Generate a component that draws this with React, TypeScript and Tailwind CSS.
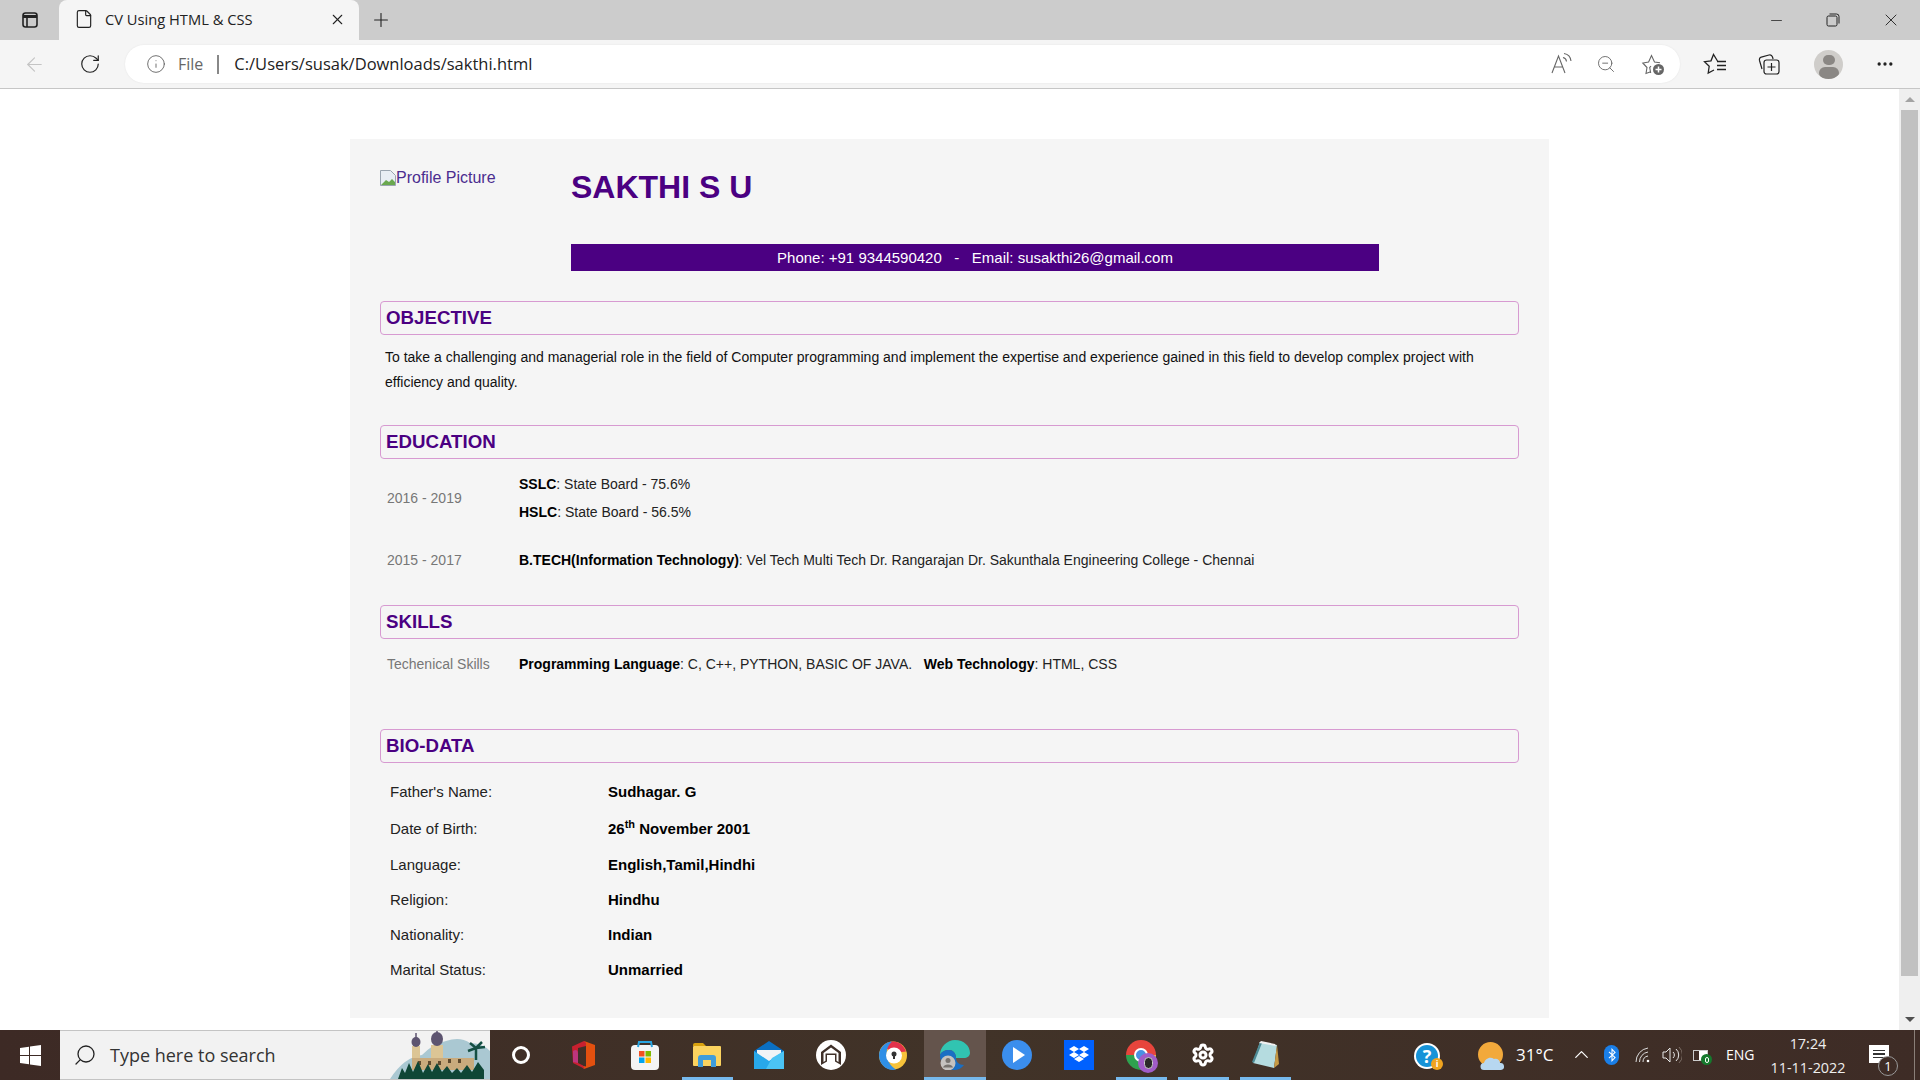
import { ReactNode } from "react";
import {
  ArrowLeft,
  ChevronUp,
  File,
  Info,
  Minus,
  MoreHorizontal,
  Plus,
  RotateCw,
  Search,
  Settings,
  X,
  ZoomOut,
} from "lucide-react";

function Heading({ title }: { title: string }) {
  return (
    <div className="h-[34px] border border-[#d79ad1] rounded-[4px] flex items-center pl-[5px] text-[18.7px] font-bold text-[#4b0082]">
      {title}
    </div>
  );
}

function BioRow({ label, value, top }: { label: string; value: ReactNode; top: string }) {
  return (
    <div className={`flex h-[20px] items-center text-[15px] ${top}`}>
      <div className="w-[228px] pl-[10px] text-[#222]">{label}</div>
      <div className="font-bold text-black">{value}</div>
    </div>
  );
}

function TabBar() {
  return (
    <div className="h-[40px] bg-[#cccccc] flex items-end">
      <div className="w-[59px] h-[40px] flex items-center justify-center">
        <svg width="18" height="18" viewBox="0 0 18 18" fill="none" stroke="#222" strokeWidth="1.6">
          <rect x="2" y="2" width="14" height="14" rx="2.5" />
          <path d="M2 5.5h14" strokeWidth="3" />
          <path d="M6 5v11" />
        </svg>
      </div>
      <div className="w-[300px] h-[40px] bg-[#f5f5f5] rounded-t-[8px] flex items-center pl-[15px] pr-[13px] pb-[2px]">
        <File size={20} strokeWidth={1.4} className="text-[#222]" />
        <span className="ml-[11px] flex-1 text-[14.7px] text-[#222] font-['Open_Sans',sans-serif]">CV Using HTML &amp; CSS</span>
        <X size={17} strokeWidth={1.5} className="text-[#222]" />
      </div>
      <div className="ml-[11px] h-[40px] flex items-center">
        <Plus size={22} strokeWidth={1.2} className="text-[#222]" />
      </div>
      <div className="flex-1" />
      <div className="h-[40px] flex items-center text-[#222]">
        <Minus size={17} strokeWidth={1.1} />
        <svg className="ml-[41px]" width="14" height="14" viewBox="0 0 14 14" fill="none" stroke="#222" strokeWidth="1">
          <rect x="1" y="3" width="10" height="10" rx="1.5" />
          <path d="M3.5 1h7a2.5 2.5 0 0 1 2.5 2.5v7" />
        </svg>
        <X size={20} strokeWidth={1.1} className="ml-[41px] mr-[19px]" />
      </div>
    </div>
  );
}

function AddressBar() {
  return (
    <div className="h-[49px] bg-[#f5f5f5] border-b border-[#c6c6c6] flex items-center">
      <ArrowLeft size={23} strokeWidth={1.2} className="ml-[23px] text-[#c4c4c4]" />
      <RotateCw size={22} strokeWidth={1.3} className="ml-[33px] text-[#222]" />
      <div className="ml-[24px] w-[1555px] h-[38px] bg-white rounded-full flex items-center pl-[21px] pr-[15px] shadow-[0_0_2px_rgba(0,0,0,0.08)]">
        <Info size={20} strokeWidth={1} className="text-[#555]" />
        <span className="ml-[12px] text-[16px] text-[#666] font-['Open_Sans',sans-serif]">File</span>
        <span className="ml-[14px] w-[2px] h-[19px] bg-[#888]" />
        <span className="ml-[15px] text-[16.5px] text-[#222] font-['Open_Sans',sans-serif]">C:/Users/susak/Downloads/sakthi.html</span>
        <div className="flex-1" />
        <svg width="22" height="24" viewBox="0 0 22 24" fill="none" stroke="#666" strokeWidth="1.1">
          <path d="M1 21L7.5 4 14 21M3.5 15h8" />
          <path d="M12 5.5a4.500 4.500 0 0 1 3.500 4M13 1.500a8.500 8.500 0 0 1 7 7.500" />
        </svg>
        <ZoomOut size={20} strokeWidth={1.1} className="ml-[23px] text-[#666]" />
        <svg className="ml-[25px]" width="24" height="24" viewBox="0 0 24 24" fill="none" stroke="#666" strokeWidth="1.1">
          <path d="M10 14.200L8.700 15.500l1 5.500M9.700 19.800L5 21.500l1-6L1.800 11l5.800-1L10.500 3.500l3 6.500 5.500.7" />
          <circle cx="17.500" cy="17.500" r="5.500" fill="#666" stroke="none" />
          <path d="M17.500 14.500v6M14.500 17.500h6" stroke="#fff" strokeWidth="1.5" />
        </svg>
      </div>
      <svg className="ml-[23px]" width="24" height="24" viewBox="0 0 24 24" fill="none" stroke="#222" strokeWidth="1.3">
        <path d="M14.500 9L10.500 2.500 8 8.800l-6.500.9 4.700 4.600-1 6.700 5.800-3" />
        <path d="M14 9.500h9M14 13.500h9M14 17.500h9" />
      </svg>
      <svg className="ml-[30px]" width="24" height="24" viewBox="0 0 24 24" fill="none" stroke="#222" strokeWidth="1.2">
        <path d="M5 17L2.500 8.500c-.4-1.500.3-3 1.800-3.400L12 3c1.500-.4 3 .4 3.500 2l.6 2" />
        <rect x="7" y="8" width="15" height="14" rx="2.5" />
        <path d="M14.500 11v8M10.500 15h8" />
      </svg>
      <div className="ml-[33px] w-[29px] h-[29px] rounded-full bg-[#cfcdca] flex flex-col items-center overflow-hidden">
        <div className="mt-[5px] w-[12px] h-[12px] rounded-full bg-[#8a8784]" />
        <div className="mt-[2px] w-[20px] h-[14px] rounded-full bg-[#8a8784]" />
      </div>
      <MoreHorizontal size={20} strokeWidth={2} className="ml-[32px] text-[#222]" />
    </div>
  );
}

function Scrollbar() {
  return (
    <div className="w-[21px] bg-[#efefef] flex flex-col items-center pl-[2px] pr-[2px]">
      <div className="h-[21px] flex items-center justify-center">
        <div className="w-0 h-0 border-x-[5px] border-x-transparent border-b-[5px] border-b-[#a3a3a3]" />
      </div>
      <div className="w-full h-[866px] bg-[#c1c1c1]" />
      <div className="flex-1 flex items-end justify-center pb-[8px]">
        <div className="w-0 h-0 border-x-[5px] border-x-transparent border-t-[5px] border-t-[#505050]" />
      </div>
    </div>
  );
}

function CvCard() {
  return (
    <div className="ml-[350px] mt-[50px] w-[1199px] h-[879px] bg-[#f5f5f5] px-[30px] font-['Liberation_Sans',Arial,sans-serif]">
      <div className="flex h-[162px] pt-[25px]">
        <div className="w-[191px] flex items-start pt-[5px] text-[16px] leading-[18px] text-[#4b2d8f]">
          <svg className="mt-[1px]" width="16" height="16" viewBox="0 0 16 16">
            <path d="M0.5 0.5h10l5 5v10h-15z" fill="#e8eef5" stroke="#9aa5b1" />
            <path d="M1 15l5-5 3 2 3-3 3 3v3z" fill="#6aa84f" />
          </svg>
          <span>Profile Picture</span>
        </div>
        <div className="w-[808px]">
          <div className="text-[32px] leading-[38px] font-bold text-[#4b0082] mt-[4px]">SAKTHI S U</div>
          <div className="mt-[38px] h-[27px] pt-[1px] bg-[#4b0082] text-white text-[15px] flex items-center justify-center whitespace-pre">
            {"Phone: +91 9344590420   -   Email: susakthi26@gmail.com"}
          </div>
        </div>
      </div>

      <Heading title="OBJECTIVE" />
      <p className="mt-[10px] pl-[5px] pr-[20px] text-[14px] leading-[25px] text-[#111]">
        To take a challenging and managerial role in the field of Computer programming and implement the expertise and experience gained in this field to develop complex project with efficiency and quality.
      </p>

      <div className="mt-[30px]">
        <Heading title="EDUCATION" />
      </div>
      <div className="mt-[11px] flex text-[14px] h-[56px]">
        <div className="w-[139px] pl-[7px] self-center text-[#777]">2016 - 2019</div>
        <div className="leading-[28px] text-[#222]">
          <div><b className="text-black">SSLC</b>: State Board - 75.6%</div>
          <div><b className="text-black">HSLC</b>: State Board - 56.5%</div>
        </div>
      </div>
      <div className="mt-[20px] flex items-center text-[14px] h-[28px]">
        <div className="w-[139px] pl-[7px] text-[#777]">2015 - 2017</div>
        <div className="text-[#222]">
          <b className="text-black">B.TECH(Information Technology)</b>: Vel Tech Multi Tech Dr. Rangarajan Dr. Sakunthala Engineering College - Chennai
        </div>
      </div>

      <div className="mt-[31px]">
        <Heading title="SKILLS" />
      </div>
      <div className="mt-[11px] flex items-center text-[14px] h-[28px] whitespace-pre">
        <div className="w-[139px] pl-[7px] text-[#777]">Techenical Skills</div>
        <div className="text-[#222]">
          <b className="text-black">Programming Language</b>: C, C++, PYTHON, BASIC OF JAVA.{"   "}<b className="text-black">Web Technology</b>: HTML, CSS
        </div>
      </div>

      <div className="mt-[51px]">
        <Heading title="BIO-DATA" />
      </div>
      <BioRow top="mt-[19px]" label="Father's Name:" value="Sudhagar. G" />
      <BioRow
        top="mt-[17px]"
        label="Date of Birth:"
        value={
          <span>
            26<sup className="text-[11px]">th</sup> November 2001
          </span>
        }
      />
      <BioRow top="mt-[16px]" label="Language:" value="English,Tamil,Hindhi" />
      <BioRow top="mt-[15px]" label="Religion:" value="Hindhu" />
      <BioRow top="mt-[15px]" label="Nationality:" value="Indian" />
      <BioRow top="mt-[15px]" label="Marital Status:" value="Unmarried" />
    </div>
  );
}

function TaskIcon({ children, active, open }: { children: ReactNode; active?: boolean; open?: boolean }) {
  return (
    <div className={`relative w-[62px] h-[50px] flex items-center justify-center ${active ? "bg-[#64544c]" : ""}`}>
      {children}
      {open && <div className={`absolute bottom-0 h-[3px] bg-[#76b9ed] ${active ? "left-0 right-0" : "left-[6px] right-[5px]"}`} />}
    </div>
  );
}

function SearchScene() {
  return (
    <svg className="absolute right-0 bottom-0" width="100" height="48" viewBox="0 0 100 48">
      <path d="M0 48q14-22 32-24 12-12 24-14 14-5 24 2 12 0 20 8v28z" fill="#aac8d2" />
      <rect x="22" y="15" width="8" height="16" fill="#dcc595" />
      <rect x="41" y="14" width="12" height="16" fill="#dcc595" />
      <rect x="22" y="27" width="62" height="12" fill="#c9ab7d" />
      <path d="M26 2v5M47 -1v4" stroke="#5d5470" strokeWidth="1.5" />
      <ellipse cx="26" cy="11" rx="4.5" ry="5" fill="#5d5470" />
      <ellipse cx="47" cy="8" rx="6" ry="7" fill="#5d5470" />
      <path d="M28 34v-4h3v4zM38 34v-4h3v4zM48 34v-4h3v4zM58 32v-4h3v4zM68 32v-4h3v4z" fill="#5e4a2e" />
      <path d="M86 29v-12M86 17l-8 3M86 17l9-1M86 17l-6-5M86 17l6-6" stroke="#154f43" strokeWidth="2.5" fill="none" />
      <path d="M8 48l4-11 3 5 4-10 4 9 5-11 5 12 5-9 4 8 5-9 5 9 5-6 5 7 5-5 4 5 6-8 5 7 6-10 6 8v9z" fill="#0f4636" />
    </svg>
  );
}

function Taskbar() {
  return (
    <div className="relative h-[50px] flex bg-gradient-to-r from-[#3d2a25] via-[#413328] to-[#3e2c26] text-white font-['Open_Sans',sans-serif]">
      <div className="w-[60px] flex items-center justify-center">
        <svg width="21" height="21" viewBox="0 0 21 21" fill="#fff">
          <path d="M0 3l9-1.300v8.300H0zM10 1.500L21 0v10H10zM0 11h9v8.300L0 18zM10 11h11v10l-11-1.500z" />
        </svg>
      </div>
      <div className="w-[430px] h-[50px] bg-[#f2f2f2] border-y border-[#c4c4c4] flex items-center relative overflow-hidden">
        <Search size={24} strokeWidth={1.3} className="ml-[13px] text-[#222] -scale-x-100" />
        <span className="ml-[13px] text-[18px] text-[#333]">Type here to search</span>
        <SearchScene />
      </div>
      <TaskIcon>
        <div className="w-[18px] h-[18px] rounded-full border-[3px] border-white" />
      </TaskIcon>
      <TaskIcon>
        <svg width="24" height="28" viewBox="0 0 24 28">
          <path d="M13 0l11 4v20l-11 4-3-3.500 5 1V5z" fill="#e2500f" />
          <path d="M13 0L1 5.500 2 22l12 6-2-3.500-5-2.500V7l8-2V2z" fill="#c8202f" />
          <path d="M2 10c3-2 5-1 5 3v9l-5-1z" fill="#b93f9e" opacity="0.7" />
        </svg>
      </TaskIcon>
      <TaskIcon>
        <svg width="30" height="30" viewBox="0 0 30 30">
          <rect x="1" y="5" width="28" height="25" rx="4" fill="#f4f4f4" />
          <path d="M8 7L9 2h12l1 5" fill="none" stroke="#29a4e0" strokeWidth="2" />
          <rect x="9" y="11" width="5.500" height="5.500" fill="#f25022" />
          <rect x="15.500" y="11" width="5.500" height="5.500" fill="#7fba00" />
          <rect x="9" y="17.500" width="5.500" height="5.500" fill="#00a4ef" />
          <rect x="15.500" y="17.500" width="5.500" height="5.500" fill="#ffb900" />
        </svg>
      </TaskIcon>
      <TaskIcon open>
        <svg width="28" height="24" viewBox="0 0 28 24">
          <path d="M0 2a2 2 0 0 1 2-2h8l3 3H0z" fill="#d9a20f" />
          <rect x="0" y="3" width="28" height="20" rx="1" fill="#fbd35f" />
          <path d="M5 24v-9a3 3 0 0 1 3-3h12a3 3 0 0 1 3 3v9h-5v-7h-8v7z" fill="#3f9ddb" />
        </svg>
      </TaskIcon>
      <TaskIcon>
        <svg width="30" height="28" viewBox="0 0 30 28">
          <path d="M0 10L15 0l15 10v18H0z" fill="#0a6fc2" />
          <path d="M3 9h24v8l-12 7-12-7z" fill="#f2f4f6" />
          <path d="M0 10l15 10 15-10v18H0z" fill="#28a8ea" />
          <path d="M30 10v18H12l6-11z" fill="#4bc4f5" />
        </svg>
      </TaskIcon>
      <TaskIcon>
        <svg width="30" height="30" viewBox="0 0 30 30">
          <circle cx="15" cy="15" r="15" fill="#fff" />
          <path d="M15 4.500L25 12v13l-6-3.500V15h-8v6.500L5 25V12z" fill="#3f3029" />
          <path d="M15 7.500L22.500 13v9l-2-1.200V13.500h-11v7.300l-2 1.200v-9z" fill="#fff" />
        </svg>
      </TaskIcon>
      <TaskIcon>
        <svg width="28" height="29" viewBox="0 0 28 29">
          <circle cx="14" cy="14.500" r="14" fill="#f7c23a" />
          <path d="M4 5C7 2 10 .5 14 .5c6 0 11 4 13 10L14 12z" fill="#e3324b" />
          <path d="M0 14.500C0 7 6 1 13 .5 9 4 7 9 8 14.500c1 6 3 10 9 14-1 .3-2 .5-3 .5C6 29 0 22 0 14.500z" fill="#2f8fe6" />
          <circle cx="15" cy="14.500" r="8" fill="#fff" />
          <circle cx="15" cy="13" r="2.500" fill="#333" />
          <rect x="14" y="13" width="2" height="5" fill="#333" />
        </svg>
      </TaskIcon>
      <TaskIcon active open>
        <svg width="30" height="30" viewBox="0 0 30 30">
          <path d="M0 15C0 7 7 0 15 0c9 0 15 6 15 13 0 3-3 5-6 5h-8c0-5-3-8-7-8-4 0-8 2-9 5z" fill="#31c4b1" />
          <path d="M0 15c1-3 5-5 9-5 4 0 7 3 7 8 0 4 3 7 8 7-2 3-6 5-10 5C6 30 0 23 0 15z" fill="#1a6fc4" />
          <circle cx="8" cy="23" r="7.500" fill="#c5c2bf" />
          <circle cx="8" cy="20.500" r="2.500" fill="#77736f" />
          <path d="M3 27.500c1-4 9-4 10 0z" fill="#77736f" />
        </svg>
      </TaskIcon>
      <TaskIcon>
        <div className="w-[30px] h-[30px] rounded-full bg-[#3b8eed] flex items-center justify-center">
          <div className="ml-[3px] w-0 h-0 border-y-[8px] border-y-transparent border-l-[12px] border-l-white" />
        </div>
      </TaskIcon>
      <TaskIcon>
        <div className="w-[30px] h-[30px] bg-[#0061fe] flex items-center justify-center">
          <svg width="20" height="18" viewBox="0 0 20 18" fill="#fff">
            <path d="M5 0l5 3-5 3-5-3zM15 0l5 3-5 3-5-3zM0 9l5-3 5 3-5 3zM20 9l-5-3-5 3 5 3zM5 13l5-3 5 3-5 3z" />
          </svg>
        </div>
      </TaskIcon>
      <TaskIcon open>
        <div className="relative w-[30px] h-[30px]">
          <div className="absolute left-0 top-0 w-[30px] h-[30px] rounded-full bg-[conic-gradient(#e8453c_0_25%,#f7c23a_25%_45%,#2ea24f_45%_75%,#e8453c_75%_100%)]" />
          <div className="absolute left-[8px] top-[8px] w-[14px] h-[14px] rounded-full bg-[#4a90e2] border-[2px] border-white" />
          <div className="absolute left-[12px] top-[13px] w-[20px] h-[20px] rounded-full bg-[#a05cc8] flex items-center justify-center">
            <div className="w-[9px] h-[12px] rounded-full bg-[#2a2a2a] border border-[#ccc]" />
          </div>
        </div>
      </TaskIcon>
      <TaskIcon open>
        <Settings size={24} strokeWidth={3} className="text-white" />
      </TaskIcon>
      <TaskIcon open>
        <svg width="28" height="28" viewBox="0 0 28 28">
          <path d="M9 1L26 4l-3 23L2 22z" fill="#b5dce0" />
          <path d="M9 1L1 21l2 1L11 2z" fill="#4d8a94" />
          <path d="M23 27L26 4l2 19z" fill="#c69a45" />
          <path d="M8 2l17 3-1-2L10 0z" fill="#f0f0f0" />
        </svg>
        <div className="absolute bottom-0 right-[5px] w-[10px] h-[3px] bg-[#5f9cc9]" />
      </TaskIcon>
      <div className="flex-1 relative">
        <div className="absolute left-[118px] top-[13px] w-[29px] h-[27px]">
          <div className="w-[26px] h-[26px] rounded-full bg-white flex items-center justify-center">
            <div className="w-[22px] h-[22px] rounded-full bg-[#1693d8] text-white text-[18px] leading-[22px] font-bold text-center">?</div>
          </div>
          <div className="absolute right-0 bottom-0 w-[12px] h-[12px] rounded-full bg-[#f0a41f] text-white text-[9px] leading-[12px] font-bold text-center">i</div>
        </div>
        <div className="absolute left-[182px] top-[12px] w-[28px] h-[28px]">
          <div className="absolute left-0 top-0 w-[25px] h-[25px] rounded-full bg-[#f2a93b]" />
          <svg className="absolute left-[2px] top-[14px]" width="25" height="14" viewBox="0 0 25 14">
            <path d="M4 14a3.500 3.500 0 0 1 0-7c1-4 6-7 10-4 3-1 6 1 6 4a3.500 3.500 0 0 1 1 7z" fill="#b7d7f0" />
          </svg>
        </div>
        <span className="absolute left-[220px] top-[10px] text-[17px] leading-[30px]">31°C</span>
        <ChevronUp size={23} strokeWidth={1.3} className="absolute left-[274px] top-[13px]" />
        <div className="absolute left-[308px] top-[15px] w-[15px] h-[20px] rounded-full bg-[#1a7fe8] flex items-center justify-center">
          <svg width="8" height="14" viewBox="0 0 9 16" fill="none" stroke="#fff" strokeWidth="1.2">
            <path d="M1 4.500l7 6.500-3.500 3.500V1.500L8 5 1 11.500" />
          </svg>
        </div>
        <svg className="absolute left-[339px] top-[16px]" width="15" height="17" viewBox="0 0 15 17" fill="none" stroke="#ddd" strokeWidth="1">
          <path d="M1 16A14 14 0 0 1 13 2M4.500 16a10 10 0 0 1 8.500-10M8 16a6 6 0 0 1 5-6" />
          <circle cx="13" cy="15" r="1.300" fill="#fff" stroke="none" />
        </svg>
        <svg className="absolute left-[366px] top-[15px]" width="20" height="20" viewBox="0 0 20 20" fill="none" stroke="#e8e8e8" strokeWidth="1">
          <path d="M1 7h3l4-4v14l-4-4H1z" />
          <path d="M11 7a4 4 0 0 1 0 6" />
          <path d="M14 4a8 8 0 0 1 0 12" />
          <path d="M17 2a11 11 0 0 1 0 16" stroke="#7d6f67" />
        </svg>
        <div className="absolute left-[397px] top-[20px] w-[15px] h-[11px] bg-white border border-[#ccc]">
          <div className="w-[5px] h-full bg-[#3e2c26]" />
        </div>
        <div className="absolute left-[405px] top-[24px] w-[11px] h-[11px] rounded-full bg-[#157a2d] flex items-center justify-center">
          <div className="w-[4px] h-[6px] rounded-full border border-white" />
        </div>
        <span className="absolute left-[430px] top-[13px] text-[14px] leading-[24px]">ENG</span>
        <div className="absolute left-[474px] top-[3px] w-[76px] text-center text-[14.4px] leading-[26px] text-[#eee]">
          <div className="leading-[22px]">17:24</div>
          <div>11-11-2022</div>
        </div>
        <div className="absolute left-[573px] top-[15px] w-[20px] h-[18px] bg-white flex flex-col gap-[2px] items-center justify-center">
          <div className="w-[12px] h-[1.5px] bg-[#333]" />
          <div className="w-[12px] h-[1.5px] bg-[#333]" />
          <div className="w-[12px] h-[1.5px] bg-[#333]" />
        </div>
        <div className="absolute left-[582px] top-[26px] w-[20px] h-[20px] rounded-full bg-[#3e2c26] border border-[#999] text-[13px] leading-[18px] text-center">1</div>
        <div className="absolute left-[618px] top-0 w-[1px] h-[50px] bg-[#8a7f78]" />
      </div>
    </div>
  );
}

export default function App() {
  return (
    <div className="w-[1920px] h-[1080px] overflow-hidden flex flex-col bg-white">
      <TabBar />
      <AddressBar />
      <div className="h-[941px] flex">
        <div className="flex-1">
          <CvCard />
        </div>
        <Scrollbar />
      </div>
      <Taskbar />
    </div>
  );
}
